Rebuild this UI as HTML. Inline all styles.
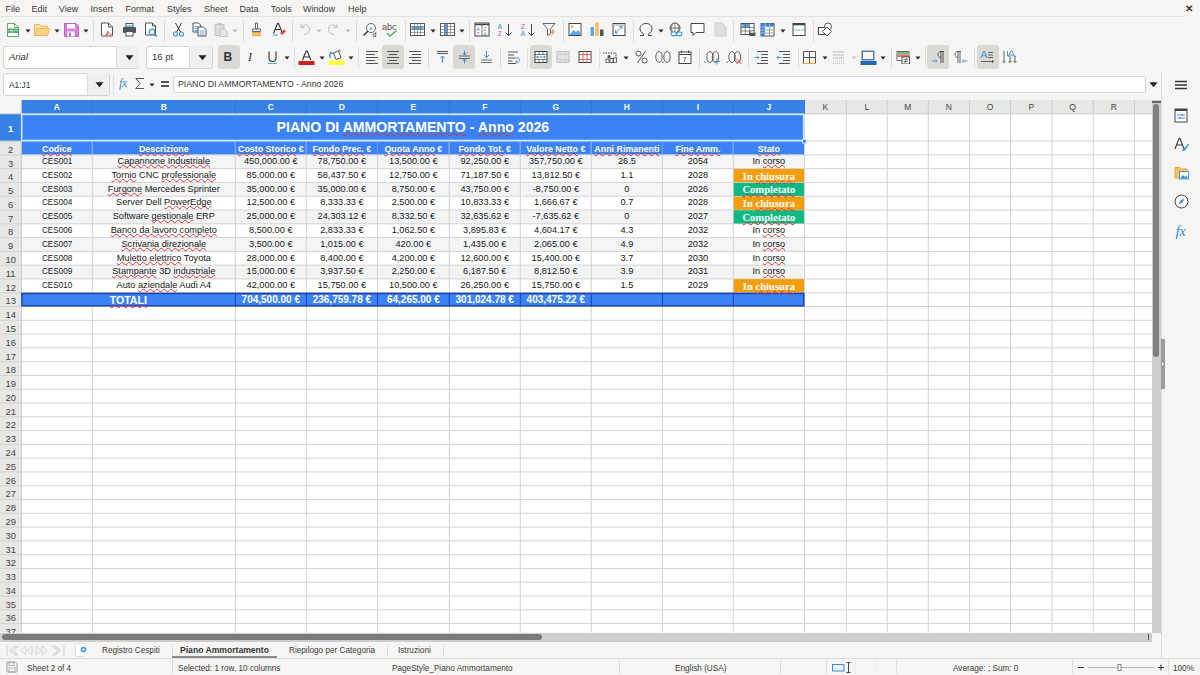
<!DOCTYPE html><html><head><meta charset="utf-8"><style>
*{margin:0;padding:0;box-sizing:border-box}
html,body{width:1200px;height:675px;overflow:hidden;background:#f6f5f4;font-family:"Liberation Sans",sans-serif;color:#333}
.ab{position:absolute}
.t{position:absolute;white-space:nowrap}
.menu{font-size:9px;color:#3a3a3a;top:5.3px;line-height:1}
.ui{font-size:9px;line-height:1;color:#3a3a3a;transform:scaleX(0.91);transform-origin:0 0;margin-top:1.3px}
.c{position:absolute;font-size:9.2px;color:#161616;white-space:nowrap;display:flex;align-items:center;justify-content:center;overflow:visible;line-height:1}
.hd{position:absolute;font-size:8.5px;color:#555;display:flex;align-items:center;justify-content:center;line-height:1}
.sep{position:absolute;width:1px;background:#dcdbda}
.sp{text-decoration:underline wavy #d63030;text-decoration-thickness:0.7px;text-underline-offset:-0.2px;text-decoration-skip-ink:none}
.arr{position:absolute;width:0;height:0;border-left:3px solid transparent;border-right:3px solid transparent;border-top:3px solid #222}
</style></head><body>

<div class="t menu" style="left:5.6px">File</div>
<div class="t menu" style="left:31.5px">Edit</div>
<div class="t menu" style="left:58.8px">View</div>
<div class="t menu" style="left:90.4px">Insert</div>
<div class="t menu" style="left:125.6px">Format</div>
<div class="t menu" style="left:167px">Styles</div>
<div class="t menu" style="left:204px">Sheet</div>
<div class="t menu" style="left:239.6px">Data</div>
<div class="t menu" style="left:270.7px">Tools</div>
<div class="t menu" style="left:303px">Window</div>
<div class="t menu" style="left:348px">Help</div>
<div class="ab" style="left:0;top:16px;width:1184px;height:1px;background:#e4e3e1"></div>
<div class="t" style="left:1185px;top:3.3px;font-size:10px;font-weight:bold;color:#333">&#x2715;</div>
<svg class="ab" style="left:0;top:0" width="1200" height="675" viewBox="0 0 1200 675"><rect x="0.00" y="100.00" width="1152.00" height="532.50" fill="#ffffff"/><rect x="21.30" y="100.00" width="1130.70" height="13.80" fill="#e7e7e6"/><rect x="21.30" y="100.00" width="783.20" height="13.80" fill="#3581e6"/><rect x="0.00" y="113.80" width="21.30" height="518.70" fill="#e7e7e6"/><rect x="0.00" y="113.80" width="21.30" height="27.30" fill="#3581e6"/><rect x="0.00" y="100.00" width="21.30" height="13.80" fill="#f6f5f4"/><rect x="21.30" y="113.80" width="783.20" height="41.08" fill="#3b82f6"/><rect x="21.30" y="154.88" width="783.20" height="13.78" fill="#f3f4f6"/><rect x="21.30" y="182.45" width="783.20" height="13.79" fill="#f3f4f6"/><rect x="21.30" y="210.02" width="783.20" height="13.79" fill="#f3f4f6"/><rect x="21.30" y="237.59" width="783.20" height="13.78" fill="#f3f4f6"/><rect x="21.30" y="265.16" width="783.20" height="13.79" fill="#f3f4f6"/><rect x="733.30" y="168.67" width="71.20" height="13.78" fill="#f59e0b"/><rect x="733.30" y="182.45" width="71.20" height="13.79" fill="#10b981"/><rect x="733.30" y="196.24" width="71.20" height="13.78" fill="#f59e0b"/><rect x="733.30" y="210.02" width="71.20" height="13.79" fill="#10b981"/><rect x="733.30" y="278.95" width="71.20" height="13.79" fill="#f59e0b"/><rect x="21.30" y="292.74" width="783.20" height="13.78" fill="#3b82f6"/><line x1="0.00" y1="141.10" x2="1152.00" y2="141.10" stroke="#d3d3d3" stroke-width="1"/><line x1="0.00" y1="154.88" x2="1152.00" y2="154.88" stroke="#d3d3d3" stroke-width="1"/><line x1="0.00" y1="168.67" x2="1152.00" y2="168.67" stroke="#d3d3d3" stroke-width="1"/><line x1="0.00" y1="182.45" x2="1152.00" y2="182.45" stroke="#d3d3d3" stroke-width="1"/><line x1="0.00" y1="196.24" x2="1152.00" y2="196.24" stroke="#d3d3d3" stroke-width="1"/><line x1="0.00" y1="210.02" x2="1152.00" y2="210.02" stroke="#d3d3d3" stroke-width="1"/><line x1="0.00" y1="223.81" x2="1152.00" y2="223.81" stroke="#d3d3d3" stroke-width="1"/><line x1="0.00" y1="237.59" x2="1152.00" y2="237.59" stroke="#d3d3d3" stroke-width="1"/><line x1="0.00" y1="251.38" x2="1152.00" y2="251.38" stroke="#d3d3d3" stroke-width="1"/><line x1="0.00" y1="265.16" x2="1152.00" y2="265.16" stroke="#d3d3d3" stroke-width="1"/><line x1="0.00" y1="278.95" x2="1152.00" y2="278.95" stroke="#d3d3d3" stroke-width="1"/><line x1="0.00" y1="292.74" x2="1152.00" y2="292.74" stroke="#d3d3d3" stroke-width="1"/><line x1="0.00" y1="306.52" x2="1152.00" y2="306.52" stroke="#d3d3d3" stroke-width="1"/><line x1="0.00" y1="320.31" x2="1152.00" y2="320.31" stroke="#d3d3d3" stroke-width="1"/><line x1="0.00" y1="334.09" x2="1152.00" y2="334.09" stroke="#d3d3d3" stroke-width="1"/><line x1="0.00" y1="347.88" x2="1152.00" y2="347.88" stroke="#d3d3d3" stroke-width="1"/><line x1="0.00" y1="361.66" x2="1152.00" y2="361.66" stroke="#d3d3d3" stroke-width="1"/><line x1="0.00" y1="375.44" x2="1152.00" y2="375.44" stroke="#d3d3d3" stroke-width="1"/><line x1="0.00" y1="389.23" x2="1152.00" y2="389.23" stroke="#d3d3d3" stroke-width="1"/><line x1="0.00" y1="403.01" x2="1152.00" y2="403.01" stroke="#d3d3d3" stroke-width="1"/><line x1="0.00" y1="416.80" x2="1152.00" y2="416.80" stroke="#d3d3d3" stroke-width="1"/><line x1="0.00" y1="430.59" x2="1152.00" y2="430.59" stroke="#d3d3d3" stroke-width="1"/><line x1="0.00" y1="444.37" x2="1152.00" y2="444.37" stroke="#d3d3d3" stroke-width="1"/><line x1="0.00" y1="458.15" x2="1152.00" y2="458.15" stroke="#d3d3d3" stroke-width="1"/><line x1="0.00" y1="471.94" x2="1152.00" y2="471.94" stroke="#d3d3d3" stroke-width="1"/><line x1="0.00" y1="485.73" x2="1152.00" y2="485.73" stroke="#d3d3d3" stroke-width="1"/><line x1="0.00" y1="499.51" x2="1152.00" y2="499.51" stroke="#d3d3d3" stroke-width="1"/><line x1="0.00" y1="513.29" x2="1152.00" y2="513.29" stroke="#d3d3d3" stroke-width="1"/><line x1="0.00" y1="527.08" x2="1152.00" y2="527.08" stroke="#d3d3d3" stroke-width="1"/><line x1="0.00" y1="540.87" x2="1152.00" y2="540.87" stroke="#d3d3d3" stroke-width="1"/><line x1="0.00" y1="554.65" x2="1152.00" y2="554.65" stroke="#d3d3d3" stroke-width="1"/><line x1="0.00" y1="568.43" x2="1152.00" y2="568.43" stroke="#d3d3d3" stroke-width="1"/><line x1="0.00" y1="582.22" x2="1152.00" y2="582.22" stroke="#d3d3d3" stroke-width="1"/><line x1="0.00" y1="596.00" x2="1152.00" y2="596.00" stroke="#d3d3d3" stroke-width="1"/><line x1="0.00" y1="609.79" x2="1152.00" y2="609.79" stroke="#d3d3d3" stroke-width="1"/><line x1="0.00" y1="623.58" x2="1152.00" y2="623.58" stroke="#d3d3d3" stroke-width="1"/><line x1="92.30" y1="113.80" x2="92.30" y2="632.50" stroke="#d3d3d3" stroke-width="1"/><line x1="235.30" y1="113.80" x2="235.30" y2="632.50" stroke="#d3d3d3" stroke-width="1"/><line x1="306.30" y1="113.80" x2="306.30" y2="632.50" stroke="#d3d3d3" stroke-width="1"/><line x1="377.50" y1="113.80" x2="377.50" y2="632.50" stroke="#d3d3d3" stroke-width="1"/><line x1="449.20" y1="113.80" x2="449.20" y2="632.50" stroke="#d3d3d3" stroke-width="1"/><line x1="520.30" y1="113.80" x2="520.30" y2="632.50" stroke="#d3d3d3" stroke-width="1"/><line x1="591.30" y1="113.80" x2="591.30" y2="632.50" stroke="#d3d3d3" stroke-width="1"/><line x1="662.50" y1="113.80" x2="662.50" y2="632.50" stroke="#d3d3d3" stroke-width="1"/><line x1="733.30" y1="113.80" x2="733.30" y2="632.50" stroke="#d3d3d3" stroke-width="1"/><line x1="804.50" y1="113.80" x2="804.50" y2="632.50" stroke="#d3d3d3" stroke-width="1"/><line x1="846.30" y1="113.80" x2="846.30" y2="632.50" stroke="#d3d3d3" stroke-width="1"/><line x1="887.20" y1="113.80" x2="887.20" y2="632.50" stroke="#d3d3d3" stroke-width="1"/><line x1="928.30" y1="113.80" x2="928.30" y2="632.50" stroke="#d3d3d3" stroke-width="1"/><line x1="969.50" y1="113.80" x2="969.50" y2="632.50" stroke="#d3d3d3" stroke-width="1"/><line x1="1010.50" y1="113.80" x2="1010.50" y2="632.50" stroke="#d3d3d3" stroke-width="1"/><line x1="1052.00" y1="113.80" x2="1052.00" y2="632.50" stroke="#d3d3d3" stroke-width="1"/><line x1="1093.30" y1="113.80" x2="1093.30" y2="632.50" stroke="#d3d3d3" stroke-width="1"/><line x1="1134.50" y1="113.80" x2="1134.50" y2="632.50" stroke="#d3d3d3" stroke-width="1"/><line x1="0.00" y1="113.80" x2="1152.00" y2="113.80" stroke="#c9c9c9" stroke-width="1"/><line x1="21.30" y1="100.00" x2="21.30" y2="632.50" stroke="#c9c9c9" stroke-width="1"/><line x1="92.30" y1="100.00" x2="92.30" y2="113.80" stroke="#3373dd" stroke-width="1"/><line x1="235.30" y1="100.00" x2="235.30" y2="113.80" stroke="#3373dd" stroke-width="1"/><line x1="306.30" y1="100.00" x2="306.30" y2="113.80" stroke="#3373dd" stroke-width="1"/><line x1="377.50" y1="100.00" x2="377.50" y2="113.80" stroke="#3373dd" stroke-width="1"/><line x1="449.20" y1="100.00" x2="449.20" y2="113.80" stroke="#3373dd" stroke-width="1"/><line x1="520.30" y1="100.00" x2="520.30" y2="113.80" stroke="#3373dd" stroke-width="1"/><line x1="591.30" y1="100.00" x2="591.30" y2="113.80" stroke="#3373dd" stroke-width="1"/><line x1="662.50" y1="100.00" x2="662.50" y2="113.80" stroke="#3373dd" stroke-width="1"/><line x1="733.30" y1="100.00" x2="733.30" y2="113.80" stroke="#3373dd" stroke-width="1"/><line x1="804.50" y1="100.00" x2="804.50" y2="113.80" stroke="#3373dd" stroke-width="1"/><line x1="846.30" y1="100.00" x2="846.30" y2="113.80" stroke="#cdcdcd" stroke-width="1"/><line x1="887.20" y1="100.00" x2="887.20" y2="113.80" stroke="#cdcdcd" stroke-width="1"/><line x1="928.30" y1="100.00" x2="928.30" y2="113.80" stroke="#cdcdcd" stroke-width="1"/><line x1="969.50" y1="100.00" x2="969.50" y2="113.80" stroke="#cdcdcd" stroke-width="1"/><line x1="1010.50" y1="100.00" x2="1010.50" y2="113.80" stroke="#cdcdcd" stroke-width="1"/><line x1="1052.00" y1="100.00" x2="1052.00" y2="113.80" stroke="#cdcdcd" stroke-width="1"/><line x1="1093.30" y1="100.00" x2="1093.30" y2="113.80" stroke="#cdcdcd" stroke-width="1"/><line x1="1134.50" y1="100.00" x2="1134.50" y2="113.80" stroke="#cdcdcd" stroke-width="1"/><rect x="21.80" y="114.30" width="782.20" height="26.30" fill="#3b82f6"/><line x1="92.30" y1="141.10" x2="92.30" y2="154.88" stroke="#6a9ef2" stroke-width="1"/><line x1="235.30" y1="141.10" x2="235.30" y2="154.88" stroke="#6a9ef2" stroke-width="1"/><line x1="306.30" y1="141.10" x2="306.30" y2="154.88" stroke="#6a9ef2" stroke-width="1"/><line x1="377.50" y1="141.10" x2="377.50" y2="154.88" stroke="#6a9ef2" stroke-width="1"/><line x1="449.20" y1="141.10" x2="449.20" y2="154.88" stroke="#6a9ef2" stroke-width="1"/><line x1="520.30" y1="141.10" x2="520.30" y2="154.88" stroke="#6a9ef2" stroke-width="1"/><line x1="591.30" y1="141.10" x2="591.30" y2="154.88" stroke="#6a9ef2" stroke-width="1"/><line x1="662.50" y1="141.10" x2="662.50" y2="154.88" stroke="#6a9ef2" stroke-width="1"/><line x1="733.30" y1="141.10" x2="733.30" y2="154.88" stroke="#6a9ef2" stroke-width="1"/><rect x="733.80" y="169.17" width="70.20" height="12.78" fill="#f59e0b"/><rect x="733.80" y="182.95" width="70.20" height="12.79" fill="#10b981"/><rect x="733.80" y="196.74" width="70.20" height="12.78" fill="#f59e0b"/><rect x="733.80" y="210.52" width="70.20" height="12.79" fill="#10b981"/><rect x="733.80" y="279.45" width="70.20" height="12.79" fill="#f59e0b"/><rect x="21.80" y="293.24" width="782.20" height="12.78" fill="#3b82f6"/><line x1="235.30" y1="292.74" x2="235.30" y2="306.52" stroke="#1e40af" stroke-width="1"/><line x1="306.30" y1="292.74" x2="306.30" y2="306.52" stroke="#1e40af" stroke-width="1"/><line x1="377.50" y1="292.74" x2="377.50" y2="306.52" stroke="#1e40af" stroke-width="1"/><line x1="449.20" y1="292.74" x2="449.20" y2="306.52" stroke="#1e40af" stroke-width="1"/><line x1="520.30" y1="292.74" x2="520.30" y2="306.52" stroke="#1e40af" stroke-width="1"/><line x1="591.30" y1="292.74" x2="591.30" y2="306.52" stroke="#1e40af" stroke-width="1"/><line x1="662.50" y1="292.74" x2="662.50" y2="306.52" stroke="#1e40af" stroke-width="1"/><line x1="733.30" y1="292.74" x2="733.30" y2="306.52" stroke="#1e40af" stroke-width="1"/><rect x="22.00" y="293.44" width="781.80" height="12.38" fill="none" stroke="#1e40af" stroke-width="1.5"/><rect x="21.80" y="114.50" width="781.80" height="25.90" fill="none" stroke="#c9ecff" stroke-width="1.4"/><rect x="802.4" y="139.5" width="3.8" height="3.6" fill="#3b82f6" stroke="#dff0ff" stroke-width="0.8"/></svg>
<div class="hd" style="left:21.3px;top:100px;width:71.0px;height:13.8px;color:#ffffff;font-weight:bold">A</div>
<div class="hd" style="left:92.3px;top:100px;width:143.0px;height:13.8px;color:#ffffff;font-weight:bold">B</div>
<div class="hd" style="left:235.3px;top:100px;width:71.0px;height:13.8px;color:#ffffff;font-weight:bold">C</div>
<div class="hd" style="left:306.3px;top:100px;width:71.2px;height:13.8px;color:#ffffff;font-weight:bold">D</div>
<div class="hd" style="left:377.5px;top:100px;width:71.7px;height:13.8px;color:#ffffff;font-weight:bold">E</div>
<div class="hd" style="left:449.2px;top:100px;width:71.1px;height:13.8px;color:#ffffff;font-weight:bold">F</div>
<div class="hd" style="left:520.3px;top:100px;width:71.0px;height:13.8px;color:#ffffff;font-weight:bold">G</div>
<div class="hd" style="left:591.3px;top:100px;width:71.2px;height:13.8px;color:#ffffff;font-weight:bold">H</div>
<div class="hd" style="left:662.5px;top:100px;width:70.8px;height:13.8px;color:#ffffff;font-weight:bold">I</div>
<div class="hd" style="left:733.3px;top:100px;width:71.2px;height:13.8px;color:#ffffff;font-weight:bold">J</div>
<div class="hd" style="left:804.5px;top:100px;width:41.8px;height:13.8px;color:#444;font-weight:normal">K</div>
<div class="hd" style="left:846.3px;top:100px;width:40.9px;height:13.8px;color:#444;font-weight:normal">L</div>
<div class="hd" style="left:887.2px;top:100px;width:41.1px;height:13.8px;color:#444;font-weight:normal">M</div>
<div class="hd" style="left:928.3px;top:100px;width:41.2px;height:13.8px;color:#444;font-weight:normal">N</div>
<div class="hd" style="left:969.5px;top:100px;width:41.0px;height:13.8px;color:#444;font-weight:normal">O</div>
<div class="hd" style="left:1010.5px;top:100px;width:41.5px;height:13.8px;color:#444;font-weight:normal">P</div>
<div class="hd" style="left:1052.0px;top:100px;width:41.3px;height:13.8px;color:#444;font-weight:normal">Q</div>
<div class="hd" style="left:1093.3px;top:100px;width:41.2px;height:13.8px;color:#444;font-weight:normal">R</div>
<div class="hd" style="left:0;top:113.8px;width:21.3px;height:27.3px;color:#ffffff;font-weight:bold;font-size:9.4px;padding-top:3px">1</div>
<div class="hd" style="left:0;top:141.1px;width:21.3px;height:13.8px;color:#444;font-weight:normal;font-size:9.4px;padding-top:3px">2</div>
<div class="hd" style="left:0;top:154.9px;width:21.3px;height:13.8px;color:#444;font-weight:normal;font-size:9.4px;padding-top:3px">3</div>
<div class="hd" style="left:0;top:168.7px;width:21.3px;height:13.8px;color:#444;font-weight:normal;font-size:9.4px;padding-top:3px">4</div>
<div class="hd" style="left:0;top:182.5px;width:21.3px;height:13.8px;color:#444;font-weight:normal;font-size:9.4px;padding-top:3px">5</div>
<div class="hd" style="left:0;top:196.2px;width:21.3px;height:13.8px;color:#444;font-weight:normal;font-size:9.4px;padding-top:3px">6</div>
<div class="hd" style="left:0;top:210.0px;width:21.3px;height:13.8px;color:#444;font-weight:normal;font-size:9.4px;padding-top:3px">7</div>
<div class="hd" style="left:0;top:223.8px;width:21.3px;height:13.8px;color:#444;font-weight:normal;font-size:9.4px;padding-top:3px">8</div>
<div class="hd" style="left:0;top:237.6px;width:21.3px;height:13.8px;color:#444;font-weight:normal;font-size:9.4px;padding-top:3px">9</div>
<div class="hd" style="left:0;top:251.4px;width:21.3px;height:13.8px;color:#444;font-weight:normal;font-size:9.4px;padding-top:3px">10</div>
<div class="hd" style="left:0;top:265.2px;width:21.3px;height:13.8px;color:#444;font-weight:normal;font-size:9.4px;padding-top:3px">11</div>
<div class="hd" style="left:0;top:278.9px;width:21.3px;height:13.8px;color:#444;font-weight:normal;font-size:9.4px;padding-top:3px">12</div>
<div class="hd" style="left:0;top:292.7px;width:21.3px;height:13.8px;color:#444;font-weight:normal;font-size:9.4px;padding-top:3px">13</div>
<div class="hd" style="left:0;top:306.5px;width:21.3px;height:13.8px;color:#444;font-weight:normal;font-size:9.4px;padding-top:3px">14</div>
<div class="hd" style="left:0;top:320.3px;width:21.3px;height:13.8px;color:#444;font-weight:normal;font-size:9.4px;padding-top:3px">15</div>
<div class="hd" style="left:0;top:334.1px;width:21.3px;height:13.8px;color:#444;font-weight:normal;font-size:9.4px;padding-top:3px">16</div>
<div class="hd" style="left:0;top:347.9px;width:21.3px;height:13.8px;color:#444;font-weight:normal;font-size:9.4px;padding-top:3px">17</div>
<div class="hd" style="left:0;top:361.7px;width:21.3px;height:13.8px;color:#444;font-weight:normal;font-size:9.4px;padding-top:3px">18</div>
<div class="hd" style="left:0;top:375.4px;width:21.3px;height:13.8px;color:#444;font-weight:normal;font-size:9.4px;padding-top:3px">19</div>
<div class="hd" style="left:0;top:389.2px;width:21.3px;height:13.8px;color:#444;font-weight:normal;font-size:9.4px;padding-top:3px">20</div>
<div class="hd" style="left:0;top:403.0px;width:21.3px;height:13.8px;color:#444;font-weight:normal;font-size:9.4px;padding-top:3px">21</div>
<div class="hd" style="left:0;top:416.8px;width:21.3px;height:13.8px;color:#444;font-weight:normal;font-size:9.4px;padding-top:3px">22</div>
<div class="hd" style="left:0;top:430.6px;width:21.3px;height:13.8px;color:#444;font-weight:normal;font-size:9.4px;padding-top:3px">23</div>
<div class="hd" style="left:0;top:444.4px;width:21.3px;height:13.8px;color:#444;font-weight:normal;font-size:9.4px;padding-top:3px">24</div>
<div class="hd" style="left:0;top:458.2px;width:21.3px;height:13.8px;color:#444;font-weight:normal;font-size:9.4px;padding-top:3px">25</div>
<div class="hd" style="left:0;top:471.9px;width:21.3px;height:13.8px;color:#444;font-weight:normal;font-size:9.4px;padding-top:3px">26</div>
<div class="hd" style="left:0;top:485.7px;width:21.3px;height:13.8px;color:#444;font-weight:normal;font-size:9.4px;padding-top:3px">27</div>
<div class="hd" style="left:0;top:499.5px;width:21.3px;height:13.8px;color:#444;font-weight:normal;font-size:9.4px;padding-top:3px">28</div>
<div class="hd" style="left:0;top:513.3px;width:21.3px;height:13.8px;color:#444;font-weight:normal;font-size:9.4px;padding-top:3px">29</div>
<div class="hd" style="left:0;top:527.1px;width:21.3px;height:13.8px;color:#444;font-weight:normal;font-size:9.4px;padding-top:3px">30</div>
<div class="hd" style="left:0;top:540.9px;width:21.3px;height:13.8px;color:#444;font-weight:normal;font-size:9.4px;padding-top:3px">31</div>
<div class="hd" style="left:0;top:554.6px;width:21.3px;height:13.8px;color:#444;font-weight:normal;font-size:9.4px;padding-top:3px">32</div>
<div class="hd" style="left:0;top:568.4px;width:21.3px;height:13.8px;color:#444;font-weight:normal;font-size:9.4px;padding-top:3px">33</div>
<div class="hd" style="left:0;top:582.2px;width:21.3px;height:13.8px;color:#444;font-weight:normal;font-size:9.4px;padding-top:3px">34</div>
<div class="hd" style="left:0;top:596.0px;width:21.3px;height:13.8px;color:#444;font-weight:normal;font-size:9.4px;padding-top:3px">35</div>
<div class="hd" style="left:0;top:609.8px;width:21.3px;height:13.8px;color:#444;font-weight:normal;font-size:9.4px;padding-top:3px">36</div>
<div class="hd" style="left:0;top:623.6px;width:21.3px;height:13.8px;color:#444;font-weight:normal;font-size:9.4px;padding-top:3px">37</div>
<div class="c" style="left:21.3px;top:113.8px;width:783.2px;height:27.3px;font-size:14.1px;font-weight:bold;color:#fff"><span>PIANO DI <span class="sp">AMMORTAMENTO</span> - <span class="sp">Anno</span> 2026</span></div>
<div class="c" style="left:21.3px;top:141.1px;width:71.0px;height:13.8px;font-size:8.9px;font-weight:bold;color:#fff;padding-top:3px"><span><span class="sp">Codice</span></span></div>
<div class="c" style="left:92.3px;top:141.1px;width:143.0px;height:13.8px;font-size:8.9px;font-weight:bold;color:#fff;padding-top:3px"><span><span class="sp">Descrizione</span></span></div>
<div class="c" style="left:235.3px;top:141.1px;width:71.0px;height:13.8px;font-size:8.9px;font-weight:bold;color:#fff;padding-top:3px"><span><span class="sp">Costo Storico</span> €</span></div>
<div class="c" style="left:306.3px;top:141.1px;width:71.2px;height:13.8px;font-size:8.9px;font-weight:bold;color:#fff;padding-top:3px"><span><span class="sp">Fondo Prec.</span> €</span></div>
<div class="c" style="left:377.5px;top:141.1px;width:71.7px;height:13.8px;font-size:8.9px;font-weight:bold;color:#fff;padding-top:3px"><span><span class="sp">Quota Anno</span> €</span></div>
<div class="c" style="left:449.2px;top:141.1px;width:71.1px;height:13.8px;font-size:8.9px;font-weight:bold;color:#fff;padding-top:3px"><span><span class="sp">Fondo Tot.</span> €</span></div>
<div class="c" style="left:520.3px;top:141.1px;width:71.0px;height:13.8px;font-size:8.9px;font-weight:bold;color:#fff;padding-top:3px"><span><span class="sp">Valore Netto</span> €</span></div>
<div class="c" style="left:591.3px;top:141.1px;width:71.2px;height:13.8px;font-size:8.9px;font-weight:bold;color:#fff;padding-top:3px"><span><span class="sp">Anni Rimanenti</span></span></div>
<div class="c" style="left:662.5px;top:141.1px;width:70.8px;height:13.8px;font-size:8.9px;font-weight:bold;color:#fff;padding-top:3px"><span><span class="sp">Fine Amm.</span></span></div>
<div class="c" style="left:733.3px;top:141.1px;width:71.2px;height:13.8px;font-size:8.9px;font-weight:bold;color:#fff;padding-top:3px"><span><span class="sp">Stato</span></span></div>
<div class="c" style="left:21.3px;top:154.9px;width:71.0px;height:13.8px;"><span><span style="display:inline-block;transform:scaleX(0.89)">CES001</span></span></div>
<div class="c" style="left:92.3px;top:154.9px;width:143.0px;height:13.8px;"><span><span class="sp">Capannone Industriale</span></span></div>
<div class="c" style="left:235.3px;top:154.9px;width:71.0px;height:13.8px;"><span>450,000.00 €</span></div>
<div class="c" style="left:306.3px;top:154.9px;width:71.2px;height:13.8px;"><span>78,750.00 €</span></div>
<div class="c" style="left:377.5px;top:154.9px;width:71.7px;height:13.8px;"><span>13,500.00 €</span></div>
<div class="c" style="left:449.2px;top:154.9px;width:71.1px;height:13.8px;"><span>92,250.00 €</span></div>
<div class="c" style="left:520.3px;top:154.9px;width:71.0px;height:13.8px;"><span>357,750.00 €</span></div>
<div class="c" style="left:591.3px;top:154.9px;width:71.2px;height:13.8px;"><span>26.5</span></div>
<div class="c" style="left:662.5px;top:154.9px;width:70.8px;height:13.8px;"><span>2054</span></div>
<div class="c" style="left:733.3px;top:154.9px;width:71.2px;height:13.8px;"><span>In <span class="sp">corso</span></span></div>
<div class="c" style="left:21.3px;top:168.7px;width:71.0px;height:13.8px;"><span><span style="display:inline-block;transform:scaleX(0.89)">CES002</span></span></div>
<div class="c" style="left:92.3px;top:168.7px;width:143.0px;height:13.8px;"><span><span class="sp">Tornio</span> CNC <span class="sp">professionale</span></span></div>
<div class="c" style="left:235.3px;top:168.7px;width:71.0px;height:13.8px;"><span>85,000.00 €</span></div>
<div class="c" style="left:306.3px;top:168.7px;width:71.2px;height:13.8px;"><span>58,437.50 €</span></div>
<div class="c" style="left:377.5px;top:168.7px;width:71.7px;height:13.8px;"><span>12,750.00 €</span></div>
<div class="c" style="left:449.2px;top:168.7px;width:71.1px;height:13.8px;"><span>71,187.50 €</span></div>
<div class="c" style="left:520.3px;top:168.7px;width:71.0px;height:13.8px;"><span>13,812.50 €</span></div>
<div class="c" style="left:591.3px;top:168.7px;width:71.2px;height:13.8px;"><span>1.1</span></div>
<div class="c" style="left:662.5px;top:168.7px;width:70.8px;height:13.8px;"><span>2028</span></div>
<div class="c" style="left:733.3px;top:168.7px;width:71.2px;height:13.8px;font-family:'Liberation Serif',serif;font-weight:bold;font-size:10.6px;color:#fff;padding-top:2.5px"><span>In <span class="sp">chiusura</span></span></div>
<div class="c" style="left:21.3px;top:182.5px;width:71.0px;height:13.8px;"><span><span style="display:inline-block;transform:scaleX(0.89)">CES003</span></span></div>
<div class="c" style="left:92.3px;top:182.5px;width:143.0px;height:13.8px;"><span><span class="sp">Furgone</span> Mercedes Sprinter</span></div>
<div class="c" style="left:235.3px;top:182.5px;width:71.0px;height:13.8px;"><span>35,000.00 €</span></div>
<div class="c" style="left:306.3px;top:182.5px;width:71.2px;height:13.8px;"><span>35,000.00 €</span></div>
<div class="c" style="left:377.5px;top:182.5px;width:71.7px;height:13.8px;"><span>8,750.00 €</span></div>
<div class="c" style="left:449.2px;top:182.5px;width:71.1px;height:13.8px;"><span>43,750.00 €</span></div>
<div class="c" style="left:520.3px;top:182.5px;width:71.0px;height:13.8px;"><span>-8,750.00 €</span></div>
<div class="c" style="left:591.3px;top:182.5px;width:71.2px;height:13.8px;"><span>0</span></div>
<div class="c" style="left:662.5px;top:182.5px;width:70.8px;height:13.8px;"><span>2026</span></div>
<div class="c" style="left:733.3px;top:182.5px;width:71.2px;height:13.8px;font-family:'Liberation Serif',serif;font-weight:bold;font-size:10.6px;color:#fff;padding-top:2.5px"><span><span class="sp">Completato</span></span></div>
<div class="c" style="left:21.3px;top:196.2px;width:71.0px;height:13.8px;"><span><span style="display:inline-block;transform:scaleX(0.89)">CES004</span></span></div>
<div class="c" style="left:92.3px;top:196.2px;width:143.0px;height:13.8px;"><span>Server Dell <span class="sp">PowerEdge</span></span></div>
<div class="c" style="left:235.3px;top:196.2px;width:71.0px;height:13.8px;"><span>12,500.00 €</span></div>
<div class="c" style="left:306.3px;top:196.2px;width:71.2px;height:13.8px;"><span>8,333.33 €</span></div>
<div class="c" style="left:377.5px;top:196.2px;width:71.7px;height:13.8px;"><span>2,500.00 €</span></div>
<div class="c" style="left:449.2px;top:196.2px;width:71.1px;height:13.8px;"><span>10,833.33 €</span></div>
<div class="c" style="left:520.3px;top:196.2px;width:71.0px;height:13.8px;"><span>1,666.67 €</span></div>
<div class="c" style="left:591.3px;top:196.2px;width:71.2px;height:13.8px;"><span>0.7</span></div>
<div class="c" style="left:662.5px;top:196.2px;width:70.8px;height:13.8px;"><span>2028</span></div>
<div class="c" style="left:733.3px;top:196.2px;width:71.2px;height:13.8px;font-family:'Liberation Serif',serif;font-weight:bold;font-size:10.6px;color:#fff;padding-top:2.5px"><span>In <span class="sp">chiusura</span></span></div>
<div class="c" style="left:21.3px;top:210.0px;width:71.0px;height:13.8px;"><span><span style="display:inline-block;transform:scaleX(0.89)">CES005</span></span></div>
<div class="c" style="left:92.3px;top:210.0px;width:143.0px;height:13.8px;"><span>Software <span class="sp">gestionale</span> ERP</span></div>
<div class="c" style="left:235.3px;top:210.0px;width:71.0px;height:13.8px;"><span>25,000.00 €</span></div>
<div class="c" style="left:306.3px;top:210.0px;width:71.2px;height:13.8px;"><span>24,303.12 €</span></div>
<div class="c" style="left:377.5px;top:210.0px;width:71.7px;height:13.8px;"><span>8,332.50 €</span></div>
<div class="c" style="left:449.2px;top:210.0px;width:71.1px;height:13.8px;"><span>32,635.62 €</span></div>
<div class="c" style="left:520.3px;top:210.0px;width:71.0px;height:13.8px;"><span>-7,635.62 €</span></div>
<div class="c" style="left:591.3px;top:210.0px;width:71.2px;height:13.8px;"><span>0</span></div>
<div class="c" style="left:662.5px;top:210.0px;width:70.8px;height:13.8px;"><span>2027</span></div>
<div class="c" style="left:733.3px;top:210.0px;width:71.2px;height:13.8px;font-family:'Liberation Serif',serif;font-weight:bold;font-size:10.6px;color:#fff;padding-top:2.5px"><span><span class="sp">Completato</span></span></div>
<div class="c" style="left:21.3px;top:223.8px;width:71.0px;height:13.8px;"><span><span style="display:inline-block;transform:scaleX(0.89)">CES006</span></span></div>
<div class="c" style="left:92.3px;top:223.8px;width:143.0px;height:13.8px;"><span><span class="sp">Banco da lavoro completo</span></span></div>
<div class="c" style="left:235.3px;top:223.8px;width:71.0px;height:13.8px;"><span>8,500.00 €</span></div>
<div class="c" style="left:306.3px;top:223.8px;width:71.2px;height:13.8px;"><span>2,833.33 €</span></div>
<div class="c" style="left:377.5px;top:223.8px;width:71.7px;height:13.8px;"><span>1,062.50 €</span></div>
<div class="c" style="left:449.2px;top:223.8px;width:71.1px;height:13.8px;"><span>3,895.83 €</span></div>
<div class="c" style="left:520.3px;top:223.8px;width:71.0px;height:13.8px;"><span>4,604.17 €</span></div>
<div class="c" style="left:591.3px;top:223.8px;width:71.2px;height:13.8px;"><span>4.3</span></div>
<div class="c" style="left:662.5px;top:223.8px;width:70.8px;height:13.8px;"><span>2032</span></div>
<div class="c" style="left:733.3px;top:223.8px;width:71.2px;height:13.8px;"><span>In <span class="sp">corso</span></span></div>
<div class="c" style="left:21.3px;top:237.6px;width:71.0px;height:13.8px;"><span><span style="display:inline-block;transform:scaleX(0.89)">CES007</span></span></div>
<div class="c" style="left:92.3px;top:237.6px;width:143.0px;height:13.8px;"><span><span class="sp">Scrivania direzionale</span></span></div>
<div class="c" style="left:235.3px;top:237.6px;width:71.0px;height:13.8px;"><span>3,500.00 €</span></div>
<div class="c" style="left:306.3px;top:237.6px;width:71.2px;height:13.8px;"><span>1,015.00 €</span></div>
<div class="c" style="left:377.5px;top:237.6px;width:71.7px;height:13.8px;"><span>420.00 €</span></div>
<div class="c" style="left:449.2px;top:237.6px;width:71.1px;height:13.8px;"><span>1,435.00 €</span></div>
<div class="c" style="left:520.3px;top:237.6px;width:71.0px;height:13.8px;"><span>2,065.00 €</span></div>
<div class="c" style="left:591.3px;top:237.6px;width:71.2px;height:13.8px;"><span>4.9</span></div>
<div class="c" style="left:662.5px;top:237.6px;width:70.8px;height:13.8px;"><span>2032</span></div>
<div class="c" style="left:733.3px;top:237.6px;width:71.2px;height:13.8px;"><span>In <span class="sp">corso</span></span></div>
<div class="c" style="left:21.3px;top:251.4px;width:71.0px;height:13.8px;"><span><span style="display:inline-block;transform:scaleX(0.89)">CES008</span></span></div>
<div class="c" style="left:92.3px;top:251.4px;width:143.0px;height:13.8px;"><span><span class="sp">Muletto elettrico</span> Toyota</span></div>
<div class="c" style="left:235.3px;top:251.4px;width:71.0px;height:13.8px;"><span>28,000.00 €</span></div>
<div class="c" style="left:306.3px;top:251.4px;width:71.2px;height:13.8px;"><span>8,400.00 €</span></div>
<div class="c" style="left:377.5px;top:251.4px;width:71.7px;height:13.8px;"><span>4,200.00 €</span></div>
<div class="c" style="left:449.2px;top:251.4px;width:71.1px;height:13.8px;"><span>12,600.00 €</span></div>
<div class="c" style="left:520.3px;top:251.4px;width:71.0px;height:13.8px;"><span>15,400.00 €</span></div>
<div class="c" style="left:591.3px;top:251.4px;width:71.2px;height:13.8px;"><span>3.7</span></div>
<div class="c" style="left:662.5px;top:251.4px;width:70.8px;height:13.8px;"><span>2030</span></div>
<div class="c" style="left:733.3px;top:251.4px;width:71.2px;height:13.8px;"><span>In <span class="sp">corso</span></span></div>
<div class="c" style="left:21.3px;top:265.2px;width:71.0px;height:13.8px;"><span><span style="display:inline-block;transform:scaleX(0.89)">CES009</span></span></div>
<div class="c" style="left:92.3px;top:265.2px;width:143.0px;height:13.8px;"><span><span class="sp">Stampante</span> 3D <span class="sp">industriale</span></span></div>
<div class="c" style="left:235.3px;top:265.2px;width:71.0px;height:13.8px;"><span>15,000.00 €</span></div>
<div class="c" style="left:306.3px;top:265.2px;width:71.2px;height:13.8px;"><span>3,937.50 €</span></div>
<div class="c" style="left:377.5px;top:265.2px;width:71.7px;height:13.8px;"><span>2,250.00 €</span></div>
<div class="c" style="left:449.2px;top:265.2px;width:71.1px;height:13.8px;"><span>6,187.50 €</span></div>
<div class="c" style="left:520.3px;top:265.2px;width:71.0px;height:13.8px;"><span>8,812.50 €</span></div>
<div class="c" style="left:591.3px;top:265.2px;width:71.2px;height:13.8px;"><span>3.9</span></div>
<div class="c" style="left:662.5px;top:265.2px;width:70.8px;height:13.8px;"><span>2031</span></div>
<div class="c" style="left:733.3px;top:265.2px;width:71.2px;height:13.8px;"><span>In <span class="sp">corso</span></span></div>
<div class="c" style="left:21.3px;top:278.9px;width:71.0px;height:13.8px;"><span><span style="display:inline-block;transform:scaleX(0.89)">CES010</span></span></div>
<div class="c" style="left:92.3px;top:278.9px;width:143.0px;height:13.8px;"><span>Auto <span class="sp">aziendale</span> Audi A4</span></div>
<div class="c" style="left:235.3px;top:278.9px;width:71.0px;height:13.8px;"><span>42,000.00 €</span></div>
<div class="c" style="left:306.3px;top:278.9px;width:71.2px;height:13.8px;"><span>15,750.00 €</span></div>
<div class="c" style="left:377.5px;top:278.9px;width:71.7px;height:13.8px;"><span>10,500.00 €</span></div>
<div class="c" style="left:449.2px;top:278.9px;width:71.1px;height:13.8px;"><span>26,250.00 €</span></div>
<div class="c" style="left:520.3px;top:278.9px;width:71.0px;height:13.8px;"><span>15,750.00 €</span></div>
<div class="c" style="left:591.3px;top:278.9px;width:71.2px;height:13.8px;"><span>1.5</span></div>
<div class="c" style="left:662.5px;top:278.9px;width:70.8px;height:13.8px;"><span>2029</span></div>
<div class="c" style="left:733.3px;top:278.9px;width:71.2px;height:13.8px;font-family:'Liberation Serif',serif;font-weight:bold;font-size:10.6px;color:#fff;padding-top:2.5px"><span>In <span class="sp">chiusura</span></span></div>
<div class="c" style="left:21.3px;top:292.7px;width:214.0px;height:13.8px;font-size:10.6px;font-weight:bold;color:#fff;padding-top:2px"><span><span class="sp">TOTALI</span></span></div>
<div class="c" style="left:235.3px;top:292.7px;width:71.0px;height:13.8px;font-size:10px;font-weight:bold;color:#fff;padding-top:1.5px"><span>704,500.00 €</span></div>
<div class="c" style="left:306.3px;top:292.7px;width:71.2px;height:13.8px;font-size:10px;font-weight:bold;color:#fff;padding-top:1.5px"><span>236,759.78 €</span></div>
<div class="c" style="left:377.5px;top:292.7px;width:71.7px;height:13.8px;font-size:10px;font-weight:bold;color:#fff;padding-top:1.5px"><span>64,265.00 €</span></div>
<div class="c" style="left:449.2px;top:292.7px;width:71.1px;height:13.8px;font-size:10px;font-weight:bold;color:#fff;padding-top:1.5px"><span>301,024.78 €</span></div>
<div class="c" style="left:520.3px;top:292.7px;width:71.0px;height:13.8px;font-size:10px;font-weight:bold;color:#fff;padding-top:1.5px"><span>403,475.22 €</span></div>
<svg class="ab" style="left:6px;top:22px" width="14" height="15" viewBox="0 0 14 15"><path d="M1.5 1.5H8.5L12.5 5.5V14.5H1.5Z" fill="#fff" stroke="#5ea672" stroke-width="1"/><path d="M8.5 1.5V5.5H12.5" fill="none" stroke="#5ea672" stroke-width="0.9"/><rect x="2" y="6.5" width="10" height="4.5" fill="#5aa56e"/><path d="M2 8.7H12M6 6.5V11" stroke="#bfe3c8" stroke-width="0.8"/></svg><svg class="ab" style="left:24.5px;top:29px" width="6" height="4" viewBox="0 0 6 4"><path d="M0.5 0.5H5.5L3 3.5Z" fill="#222"/></svg><svg class="ab" style="left:34px;top:22px" width="17" height="15" viewBox="0 0 17 15"><path d="M0.5 2.5H5.5L7 4H13.5V13.5H0.5Z" fill="#fde3a6" stroke="#f0b060" stroke-width="1"/><path d="M0.8 13.5L2.8 6.5H15.5L13.5 13.5Z" fill="#fbd583" stroke="#f0b060" stroke-width="0.9"/></svg><svg class="ab" style="left:54px;top:29px" width="6" height="4" viewBox="0 0 6 4"><path d="M0.5 0.5H5.5L3 3.5Z" fill="#222"/></svg><svg class="ab" style="left:64px;top:22px" width="15" height="15" viewBox="0 0 15 15"><path d="M0.5 1.5H12L14.5 4V14.5H0.5Z" fill="#d783d9" stroke="#c060c4" stroke-width="1"/><rect x="3" y="2" width="8" height="4.5" fill="#fff"/><rect x="3.5" y="9.5" width="7" height="5" fill="#fff"/><rect x="5" y="10.5" width="1.8" height="4" fill="#c060c4"/></svg><svg class="ab" style="left:83px;top:29px" width="6" height="4" viewBox="0 0 6 4"><path d="M0.5 0.5H5.5L3 3.5Z" fill="#222"/></svg><div class="ab" style="left:93px;top:20px;width:1px;height:22px;background:#dedddb"></div><svg class="ab" style="left:100px;top:22px" width="14" height="15" viewBox="0 0 14 15"><path d="M1.5 1H8.5L12.5 5V14H1.5Z" fill="#fff" stroke="#555"/><path d="M8.5 1V5H12.5" fill="none" stroke="#555"/><path d="M6 14C7 10 8 8 8.5 10.5C9 12 11 12.5 13 12.8M8.5 10.5L6.5 13.5" fill="none" stroke="#e0443e" stroke-width="1"/></svg><svg class="ab" style="left:122px;top:22px" width="15" height="15" viewBox="0 0 15 15"><rect x="4" y="1.5" width="7" height="4" fill="#fff" stroke="#555"/><rect x="1" y="5" width="13" height="6" rx="1" fill="#555"/><rect x="3" y="3.5" width="9" height="1.6" fill="#5aaee0"/><rect x="4" y="9.5" width="7" height="4.5" fill="#fff" stroke="#555"/></svg><svg class="ab" style="left:144px;top:22px" width="14" height="15" viewBox="0 0 14 15"><path d="M1.5 1H8.5L11.5 4V13H1.5Z" fill="#fff" stroke="#555"/><path d="M8.5 1V4H11.5" fill="none" stroke="#555"/><circle cx="8" cy="10" r="2.8" fill="#fff" stroke="#3a8fd6" stroke-width="1.2"/><path d="M10 12L13 14.5" stroke="#3a8fd6" stroke-width="1.4"/></svg><div class="ab" style="left:164px;top:20px;width:1px;height:22px;background:#dedddb"></div><svg class="ab" style="left:172px;top:22px" width="13" height="15" viewBox="0 0 13 15"><path d="M3.5 1L8.5 10M9.5 1L4.5 10" stroke="#333" stroke-width="1"/><circle cx="3.5" cy="12" r="2" fill="#fff" stroke="#3a8fd6" stroke-width="1.1"/><circle cx="9.5" cy="12" r="2" fill="#fff" stroke="#3a8fd6" stroke-width="1.1"/></svg><svg class="ab" style="left:192px;top:22px" width="15" height="15" viewBox="0 0 15 15"><path d="M1 1H6.5L8.5 3V10H1Z" fill="#fff" stroke="#555"/><path d="M2.5 4.5H6.5M2.5 6.5H6.5M2.5 8.5H6.5" stroke="#3a8fd6" stroke-width="0.8"/><path d="M6 5H11.5L14 7.5V14H6Z" fill="#fff" stroke="#555"/><path d="M7.5 9H12.5M7.5 11H12.5M7.5 13H12.5" stroke="#3a8fd6" stroke-width="0.8"/></svg><svg class="ab" style="left:214px;top:22px" width="14" height="15" viewBox="0 0 14 15"><rect x="1" y="2.5" width="9" height="11" fill="#dcdcdc" stroke="#c4c4c4"/><rect x="3.5" y="1" width="4" height="2.5" fill="#c4c4c4"/><path d="M6 7H10.5L13 9.5V14.5H6Z" fill="#e6e6e6" stroke="#c4c4c4"/></svg><svg class="ab" style="left:232px;top:29px" width="6" height="4" viewBox="0 0 6 4"><path d="M0.5 0.5H5.5L3 3.5Z" fill="#bdbdbd"/></svg><div class="ab" style="left:243px;top:20px;width:1px;height:22px;background:#dedddb"></div><svg class="ab" style="left:251px;top:22px" width="11" height="15" viewBox="0 0 11 15"><path d="M4.5 1H6.5V6.5H4.5Z" fill="#fff" stroke="#555" stroke-width="0.9"/><path d="M1.5 7H9.5V9.5H1.5Z" fill="#fff" stroke="#555" stroke-width="0.9"/><path d="M1 10H10V14H1Z" fill="#f2a23c"/><path d="M1 12H10" stroke="#fff" stroke-width="0.7"/></svg><svg class="ab" style="left:272px;top:22px" width="14" height="15" viewBox="0 0 14 15"><path d="M1.5 11.5L5.5 1.5H6.5L10 10" fill="none" stroke="#333" stroke-width="1.1"/><path d="M3.3 7.5H8.2" stroke="#333"/><path d="M1 13H6" stroke="#3a8fd6" stroke-width="0.9"/><path d="M8 11L12 7.5L14 9.5L10 13Z" fill="#e0443e"/></svg><div class="ab" style="left:292px;top:20px;width:1px;height:22px;background:#dedddb"></div><svg class="ab" style="left:297px;top:22px" width="14" height="15" viewBox="0 0 14 15"><path d="M4 5.5C6 2 12 2 12.5 7C12.8 10 10 12 7 12.5M4 5.5V2M4 5.5H7.5" fill="none" stroke="#bdbdbd" stroke-width="1"/></svg><svg class="ab" style="left:316px;top:29px" width="6" height="4" viewBox="0 0 6 4"><path d="M0.5 0.5H5.5L3 3.5Z" fill="#bdbdbd"/></svg><svg class="ab" style="left:327px;top:22px" width="14" height="15" viewBox="0 0 14 15"><path d="M10 5.5C8 2 2 2 1.5 7C1.2 10 4 12 7 12.5M10 5.5V2M10 5.5H6.5" fill="none" stroke="#bdbdbd" stroke-width="1"/></svg><svg class="ab" style="left:345px;top:29px" width="6" height="4" viewBox="0 0 6 4"><path d="M0.5 0.5H5.5L3 3.5Z" fill="#bdbdbd"/></svg><div class="ab" style="left:356px;top:20px;width:1px;height:22px;background:#dedddb"></div><svg class="ab" style="left:362px;top:22px" width="16" height="15" viewBox="0 0 16 15"><circle cx="9" cy="6" r="4.5" fill="#fff" stroke="#555" stroke-width="0.9"/><path d="M5.8 9.2L1.5 13.5" stroke="#333" stroke-width="1.5"/><text x="7" y="8" font-size="6" fill="#3a8fd6" font-family="Liberation Sans">a</text><text x="10.5" y="14.5" font-size="7" fill="#333" font-family="Liberation Sans">d</text></svg><svg class="ab" style="left:382px;top:22px" width="17" height="15" viewBox="0 0 17 15"><text x="0" y="8" font-size="9" fill="#555" font-family="Liberation Sans">abc</text><path d="M5 11L8 14L14.5 8.5" fill="none" stroke="#3fb36a" stroke-width="1.3"/></svg><div class="ab" style="left:405px;top:20px;width:1px;height:22px;background:#dedddb"></div><svg class="ab" style="left:410px;top:22px" width="15" height="15" viewBox="0 0 15 15"><rect x="0.5" y="1.5" width="14" height="12" fill="#fff" stroke="#555" stroke-width="1"/><rect x="1.5" y="4.5" width="12" height="3" fill="#5aa7e6"/><path d="M1 4.5H14M1 7.5H14M1 10.5H14M4.5 1.5V13.5M7.5 1.5V13.5M10.5 1.5V13.5" stroke="#666" stroke-width="0.6"/></svg><svg class="ab" style="left:429.5px;top:29px" width="6" height="4" viewBox="0 0 6 4"><path d="M0.5 0.5H5.5L3 3.5Z" fill="#222"/></svg><svg class="ab" style="left:440px;top:22px" width="15" height="15" viewBox="0 0 15 15"><rect x="0.5" y="1.5" width="14" height="12" fill="#fff" stroke="#555" stroke-width="1"/><rect x="4.25" y="2" width="3.25" height="11" fill="#5aa7e6"/><path d="M1 4.5H14M1 7.5H14M1 10.5H14M4.5 1.5V13.5M7.5 1.5V13.5M10.5 1.5V13.5" stroke="#666" stroke-width="0.6"/></svg><svg class="ab" style="left:458.7px;top:29px" width="6" height="4" viewBox="0 0 6 4"><path d="M0.5 0.5H5.5L3 3.5Z" fill="#222"/></svg><div class="ab" style="left:469px;top:20px;width:1px;height:22px;background:#dedddb"></div><svg class="ab" style="left:474px;top:22px" width="16" height="15" viewBox="0 0 16 15"><rect x="1" y="1" width="14" height="13" fill="#fff" stroke="#444"/><path d="M1 2.5H15" stroke="#444" stroke-width="1.5"/><path d="M8 2V14" stroke="#444" stroke-width="0.7"/><text x="2.2" y="8.5" font-size="5.5" fill="#3a8fd6" font-family="Liberation Sans">A</text><text x="2.2" y="13.5" font-size="5.5" fill="#c55fc7" font-family="Liberation Sans">Z</text><text x="9.3" y="8.5" font-size="5.5" fill="#c55fc7" font-family="Liberation Sans">Z</text><text x="9.3" y="13.5" font-size="5.5" fill="#3a8fd6" font-family="Liberation Sans">A</text></svg><svg class="ab" style="left:497px;top:22px" width="16" height="15" viewBox="0 0 16 15"><text x="0.5" y="7" font-size="7" fill="#3a8fd6" font-family="Liberation Sans">A</text><text x="0.8" y="14" font-size="7" fill="#c55fc7" font-family="Liberation Sans">Z</text><path d="M11.5 2V13.5M8.5 10.5L11.5 13.5L14.5 10.5" fill="none" stroke="#444" stroke-width="1"/></svg><svg class="ab" style="left:520px;top:22px" width="16" height="15" viewBox="0 0 16 15"><text x="0.8" y="7" font-size="7" fill="#c55fc7" font-family="Liberation Sans">Z</text><text x="0.5" y="14" font-size="7" fill="#3a8fd6" font-family="Liberation Sans">A</text><path d="M11.5 2V13.5M8.5 10.5L11.5 13.5L14.5 10.5" fill="none" stroke="#444" stroke-width="1"/></svg><svg class="ab" style="left:542px;top:22px" width="14" height="15" viewBox="0 0 14 15"><path d="M1 1.5H13L8.5 7V12L5.5 13.5V7Z" fill="#fff" stroke="#555" stroke-width="0.9"/><path d="M11 7L8.5 11H10.5L9 14.5L13 9.5H11L12.5 7Z" fill="#f2a23c"/></svg><div class="ab" style="left:562.5px;top:20px;width:1px;height:22px;background:#dedddb"></div><svg class="ab" style="left:568px;top:22px" width="14" height="15" viewBox="0 0 14 15"><rect x="1" y="1.5" width="12" height="12" fill="#fff" stroke="#444"/><circle cx="4" cy="4.5" r="1.2" fill="#f2a23c"/><path d="M1.5 13L5.5 8L8 10L10 8L12.5 11V13Z" fill="#5aa7e6"/></svg><svg class="ab" style="left:590px;top:22px" width="14" height="15" viewBox="0 0 14 15"><rect x="0.5" y="5" width="3.5" height="9" fill="#5aa7e6"/><rect x="5.2" y="0.5" width="3.5" height="13.5" fill="#f5c060"/><rect x="10" y="7.5" width="3.5" height="6.5" fill="#555"/></svg><svg class="ab" style="left:612px;top:22px" width="14" height="15" viewBox="0 0 14 15"><rect x="1" y="1.5" width="12" height="12" fill="#fff" stroke="#444"/><rect x="1.5" y="2" width="11" height="2" fill="#ccc"/><path d="M3.5 11L10 4.5M10 4.5H7.5M10 4.5V7M3.5 11H6M3.5 11V8.5" fill="none" stroke="#3a8fd6" stroke-width="1"/></svg><div class="ab" style="left:633px;top:20px;width:1px;height:22px;background:#dedddb"></div><svg class="ab" style="left:638px;top:22px" width="16" height="15" viewBox="0 0 16 15"><path d="M2 13.5H5.5V12C3 10.5 2 8.5 2 6.5C2 3.5 4.5 1.5 8 1.5C11.5 1.5 14 3.5 14 6.5C14 8.5 13 10.5 10.5 12V13.5H14" fill="none" stroke="#444" stroke-width="1"/></svg><svg class="ab" style="left:657.5px;top:29px" width="6" height="4" viewBox="0 0 6 4"><path d="M0.5 0.5H5.5L3 3.5Z" fill="#222"/></svg><svg class="ab" style="left:668px;top:22px" width="16" height="15" viewBox="0 0 16 15"><circle cx="7" cy="6" r="5" fill="#fff" stroke="#444" stroke-width="0.9"/><path d="M2 6H12M7 1V11M4.5 2C3.3 4.5 3.3 7.5 4.5 10M9.5 2C10.7 4.5 10.7 7.5 9.5 10" fill="none" stroke="#444" stroke-width="0.7"/><rect x="3" y="10" width="6" height="3.6" rx="1.8" fill="#fff" stroke="#3a8fd6" stroke-width="1.1"/><rect x="8" y="10" width="6" height="3.6" rx="1.8" fill="none" stroke="#3a8fd6" stroke-width="1.1"/></svg><svg class="ab" style="left:690px;top:22px" width="15" height="15" viewBox="0 0 15 15"><path d="M1 1.5H14V10.5H6L3 13.5V10.5H1Z" fill="#fff" stroke="#444" stroke-width="1"/></svg><svg class="ab" style="left:714px;top:22px" width="13" height="15" viewBox="0 0 13 15"><path d="M1 1H8L12 5V14H1Z" fill="#dedede" stroke="#d0d0d0"/></svg><div class="ab" style="left:733px;top:20px;width:1px;height:22px;background:#dedddb"></div><svg class="ab" style="left:740px;top:22px" width="16" height="15" viewBox="0 0 16 15"><rect x="1" y="1.5" width="13" height="11" fill="#fff" stroke="#444" stroke-width="0.9"/><rect x="1.5" y="2" width="8" height="3.5" fill="#5aa7e6"/><path d="M1 5.5H14M1 9H14M5.3 1.5V12.5M9.6 1.5V12.5" stroke="#444" stroke-width="0.6"/><rect x="9" y="10" width="6.5" height="4" rx="1" fill="#555"/><rect x="10" y="9" width="4.5" height="2" fill="#fff" stroke="#555" stroke-width="0.6"/></svg><svg class="ab" style="left:760px;top:22px" width="15" height="15" viewBox="0 0 15 15"><rect x="1" y="1.5" width="13" height="12.5" fill="#fff" stroke="#444" stroke-width="0.9"/><rect x="1" y="1.5" width="4.3" height="12.5" fill="#3f86d2"/><rect x="1" y="1.5" width="13" height="3.5" fill="#3f86d2"/><path d="M1 5H14M1 8H14M1 11H14M5.3 1.5V14M9.6 1.5V14" stroke="#fff" stroke-width="0.5"/><path d="M5.3 8H14M5.3 11H14M9.6 5V14" stroke="#444" stroke-width="0.5"/></svg><svg class="ab" style="left:780px;top:29px" width="6" height="4" viewBox="0 0 6 4"><path d="M0.5 0.5H5.5L3 3.5Z" fill="#222"/></svg><svg class="ab" style="left:792px;top:22px" width="14" height="15" viewBox="0 0 14 15"><rect x="1" y="1.5" width="12" height="12" fill="#fff" stroke="#444"/><rect x="1" y="1.5" width="12" height="1.8" fill="#444"/><path d="M1.5 8H12.5" stroke="#3a8fd6" stroke-dasharray="1.5 1"/></svg><div class="ab" style="left:812.5px;top:20px;width:1px;height:22px;background:#dedddb"></div><svg class="ab" style="left:818px;top:22px" width="15" height="15" viewBox="0 0 15 15"><rect x="0.5" y="5.5" width="7" height="7" fill="#fff" stroke="#444"/><circle cx="10" cy="4.5" r="3.5" fill="#fff" stroke="#444" stroke-width="0.9"/><path d="M9 5L13.5 9.5L9 14L4.5 9.5Z" fill="#fff" stroke="#444" stroke-width="0.9"/></svg>
<div class="ab" style="left:3.3px;top:45.6px;width:136px;height:23px;background:#fff;border:1px solid #d3d2d0;border-radius:3px"></div><div class="ab" style="left:116.3px;top:46.1px;width:22.5px;height:22px;background:#f1f0ee;border-left:1px solid #dcdbd9;border-radius:0 3px 3px 0"></div><div class="t" style="left:9px;top:50.6px;font-size:9.5px;font-style:italic;color:#333">Arial</div><svg class="ab" style="left:125.19999999999999px;top:55.2px" width="9" height="5.5" viewBox="0.3 0.3 5.4 3.4"><path d="M0.5 0.5H5.5L3 3.5Z" fill="#222"/></svg><div class="ab" style="left:145.5px;top:45.6px;width:67px;height:23px;background:#fff;border:1px solid #d3d2d0;border-radius:3px"></div><div class="ab" style="left:189.3px;top:46.1px;width:22.5px;height:22px;background:#f1f0ee;border-left:1px solid #dcdbd9;border-radius:0 3px 3px 0"></div><div class="t" style="left:152px;top:50.6px;font-size:9.5px;color:#333">16 pt</div><svg class="ab" style="left:198px;top:55.2px" width="9" height="5.5" viewBox="0.3 0.3 5.4 3.4"><path d="M0.5 0.5H5.5L3 3.5Z" fill="#222"/></svg><div class="ab" style="left:218px;top:45.2px;width:21.69999999999999px;height:23.799999999999997px;background:#dbd9d6;border-radius:3px"></div><div class="t" style="left:223.5px;top:50px;font-size:12px;font-weight:bold;color:#333">B</div><div class="t" style="left:248px;top:50px;font-size:12px;font-style:italic;color:#333;font-family:'Liberation Serif',serif">I</div><svg class="ab" style="left:267px;top:50px" width="11" height="14" viewBox="0 0 11 14"><path d="M2 1.5V8C2 10.5 3.5 11.5 5.5 11.5C7.5 11.5 9 10.5 9 8V1.5" fill="none" stroke="#333" stroke-width="1.1"/><path d="M1 13.5H10" stroke="#5aa7e6" stroke-width="1.2"/></svg><svg class="ab" style="left:283.7px;top:56px" width="6" height="4" viewBox="0 0 6 4"><path d="M0.5 0.5H5.5L3 3.5Z" fill="#222"/></svg><div class="ab" style="left:294px;top:47px;width:1px;height:21px;background:#dedddb"></div><svg class="ab" style="left:298px;top:49px" width="17" height="17" viewBox="0 0 17 17"><path d="M4.5 11L8.2 2H9.2L12.8 11M5.8 8H11.6" fill="none" stroke="#333" stroke-width="1.1"/><rect x="0.5" y="12" width="16" height="4" fill="#c9211e"/></svg><svg class="ab" style="left:318.7px;top:56px" width="6" height="4" viewBox="0 0 6 4"><path d="M0.5 0.5H5.5L3 3.5Z" fill="#222"/></svg><svg class="ab" style="left:328px;top:49px" width="17" height="17" viewBox="0 0 17 17"><path d="M5.5 4L10.5 2L13 8.5L8 10.5Z" fill="#fff" stroke="#444" stroke-width="0.9"/><path d="M10.5 2C11 0.5 12.5 0.8 12.3 2.5" fill="none" stroke="#444" stroke-width="0.8"/><path d="M2 4H5.5M2 4V9" fill="none" stroke="#3a8fd6" stroke-width="1.3"/><rect x="0.5" y="11.5" width="16" height="4.5" fill="#ffff38"/></svg><svg class="ab" style="left:348px;top:56px" width="6" height="4" viewBox="0 0 6 4"><path d="M0.5 0.5H5.5L3 3.5Z" fill="#222"/></svg><div class="ab" style="left:358px;top:47px;width:1px;height:21px;background:#dedddb"></div><svg class="ab" style="left:366px;top:50px" width="13" height="14" viewBox="0 0 13 14"><path d="M0 1.5H12M0 4.5H9M0 7.5H12M0 10.5H9M0 13.5H12" stroke="#555" stroke-width="1"/></svg><div class="ab" style="left:382px;top:45.2px;width:22px;height:23.799999999999997px;background:#dbd9d6;border-radius:3px"></div><svg class="ab" style="left:387px;top:50px" width="13" height="14" viewBox="0 0 13 14"><path d="M0 1.5H12M2 4.5H10M0 7.5H12M2 10.5H10M0 13.5H12" stroke="#555" stroke-width="1"/></svg><svg class="ab" style="left:409px;top:50px" width="13" height="14" viewBox="0 0 13 14"><path d="M0 1.5H12M3 4.5H12M0 7.5H12M3 10.5H12M0 13.5H12" stroke="#555" stroke-width="1"/></svg><div class="ab" style="left:428px;top:47px;width:1px;height:21px;background:#dedddb"></div><svg class="ab" style="left:436px;top:50px" width="13" height="14" viewBox="0 0 13 14"><path d="M1 1.5H12M1 3.5H12" stroke="#444" stroke-width="0.9"/><path d="M6.5 13V6M4 8.5L6.5 6L9 8.5" fill="none" stroke="#3a8fd6" stroke-width="1"/></svg><div class="ab" style="left:453px;top:45.2px;width:22px;height:23.799999999999997px;background:#dbd9d6;border-radius:3px"></div><svg class="ab" style="left:458px;top:50px" width="13" height="14" viewBox="0 0 13 14"><path d="M1 6H12M1 8.5H12" stroke="#444" stroke-width="0.75"/><path d="M6.5 0.5V5M4.5 3L6.5 5L8.5 3M6.5 13.5V9M4.5 11L6.5 9L8.5 11" fill="none" stroke="#3a8fd6" stroke-width="1"/></svg><svg class="ab" style="left:480px;top:50px" width="13" height="14" viewBox="0 0 13 14"><path d="M1 10H12M1 12.5H12" stroke="#444" stroke-width="0.75"/><path d="M6.5 0.5V7.5M4 5L6.5 7.5L9 5" fill="none" stroke="#3a8fd6" stroke-width="1"/></svg><div class="ab" style="left:500px;top:47px;width:1px;height:21px;background:#dedddb"></div><svg class="ab" style="left:507px;top:50px" width="14" height="14" viewBox="0 0 14 14"><path d="M1 2H11M1 5H7M1 8H8M1 11H5.5M1 13.5H9" stroke="#444" stroke-width="0.9"/><path d="M8 8H11C13 8 13 12 11 12H9M10 10.5L8.7 12L10 13.5" fill="none" stroke="#3a8fd6" stroke-width="0.9"/></svg><div class="ab" style="left:527px;top:47px;width:1px;height:21px;background:#dedddb"></div><div class="ab" style="left:530px;top:45.2px;width:21.700000000000045px;height:23.799999999999997px;background:#dbd9d6;border-radius:3px"></div><svg class="ab" style="left:534px;top:50px" width="14" height="14" viewBox="0 0 14 14"><rect x="1" y="1.5" width="12" height="11" fill="#fff" stroke="#444"/><path d="M1 4.5H13M1 9.5H13M5 1.5V4.5M9 1.5V4.5M5 9.5V12.5M9 9.5V12.5" stroke="#444" stroke-width="0.7"/><path d="M2.5 7H11.5M2.5 7L4 5.8M2.5 7L4 8.2M11.5 7L10 5.8M11.5 7L10 8.2" stroke="#3a8fd6" stroke-width="0.9"/></svg><svg class="ab" style="left:556px;top:50px" width="14" height="14" viewBox="0 0 14 14"><rect x="1" y="1.5" width="12" height="11" fill="#e3e3e3" stroke="#c2c2c2"/><path d="M1 4.5H13M1 9.5H13M5 1.5V4.5M9 1.5V4.5M5 9.5V12.5M9 9.5V12.5" stroke="#c2c2c2" stroke-width="0.7"/></svg><svg class="ab" style="left:578px;top:50px" width="14" height="14" viewBox="0 0 14 14"><rect x="1" y="1.5" width="12" height="11" fill="#fff" stroke="#444"/><path d="M1 4.5H13M1 9.5H13M5 1.5V12.5M9 1.5V12.5" stroke="#e0443e" stroke-width="0.8"/></svg><div class="ab" style="left:598.7px;top:47px;width:1px;height:21px;background:#dedddb"></div><svg class="ab" style="left:602px;top:50px" width="16" height="14" viewBox="0 0 16 14"><path d="M1 3H14V11" fill="none" stroke="#444" stroke-dasharray="1.5 1"/><rect x="4" y="9" width="3" height="3.5" fill="#fff" stroke="#444" stroke-width="0.8"/><rect x="8" y="8.5" width="3" height="4" fill="#fff" stroke="#444" stroke-width="0.8"/><rect x="11.5" y="8" width="3" height="4.5" fill="#fff" stroke="#444" stroke-width="0.8"/><circle cx="7" cy="6.5" r="1.5" fill="#444"/></svg><svg class="ab" style="left:623px;top:56px" width="6" height="4" viewBox="0 0 6 4"><path d="M0.5 0.5H5.5L3 3.5Z" fill="#222"/></svg><svg class="ab" style="left:635px;top:50px" width="13" height="14" viewBox="0 0 13 14"><circle cx="3.5" cy="3.5" r="2.5" fill="none" stroke="#555" stroke-width="1"/><circle cx="9.5" cy="10.5" r="2.5" fill="none" stroke="#555" stroke-width="1"/><path d="M10.5 1L2.5 13" stroke="#555" stroke-width="1"/></svg><svg class="ab" style="left:655px;top:50px" width="17" height="14" viewBox="0 0 17 14"><ellipse cx="4" cy="7" rx="3.2" ry="5.5" fill="none" stroke="#555" stroke-width="0.9"/><ellipse cx="12" cy="7" rx="3.2" ry="5.5" fill="none" stroke="#555" stroke-width="0.9"/><circle cx="7.9" cy="12.3" r="0.7" fill="#555"/></svg><svg class="ab" style="left:678px;top:50px" width="14" height="14" viewBox="0 0 14 14"><rect x="1" y="2" width="12" height="11.5" fill="#fff" stroke="#444"/><path d="M1 4.5H13M3.5 0.5V3M10.5 0.5V3" stroke="#444"/><text x="4.5" y="12" font-size="7.5" fill="#444" font-family="Liberation Sans">7</text></svg><div class="ab" style="left:699px;top:47px;width:1px;height:21px;background:#dedddb"></div><svg class="ab" style="left:704px;top:50px" width="17" height="16" viewBox="0 0 17 16"><circle cx="1" cy="12.3" r="0.7" fill="#555"/><ellipse cx="6" cy="7" rx="3.2" ry="5.5" fill="none" stroke="#555" stroke-width="0.9"/><ellipse cx="11.5" cy="7" rx="3.2" ry="5.5" fill="none" stroke="#555" stroke-width="0.9"/><path d="M13 8.5V14.5M10 11.5H16" stroke="#3a8fd6" stroke-width="1"/></svg><svg class="ab" style="left:726px;top:50px" width="17" height="16" viewBox="0 0 17 16"><circle cx="1" cy="12.3" r="0.7" fill="#555"/><ellipse cx="6" cy="7" rx="3.2" ry="5.5" fill="none" stroke="#555" stroke-width="0.9"/><ellipse cx="11.5" cy="7" rx="3.2" ry="5.5" fill="none" stroke="#555" stroke-width="0.9"/><path d="M10.5 9L15.5 14M15.5 9L10.5 14" stroke="#e0443e" stroke-width="1"/></svg><div class="ab" style="left:748px;top:47px;width:1px;height:21px;background:#dedddb"></div><svg class="ab" style="left:754px;top:50px" width="15" height="14" viewBox="0 0 15 14"><path d="M3 1.5H14M7 4.5H14M7 7.5H14M7 10.5H14M3 13.5H14" stroke="#444" stroke-width="0.9"/><path d="M0.5 7.5H5M3.3 5.8L5 7.5L3.3 9.2" fill="none" stroke="#3a8fd6" stroke-width="0.9"/></svg><svg class="ab" style="left:776px;top:50px" width="15" height="14" viewBox="0 0 15 14"><path d="M3 1.5H14M7 4.5H14M7 7.5H14M7 10.5H14M3 13.5H14" stroke="#444" stroke-width="0.9"/><path d="M5.5 7.5H1M2.7 5.8L1 7.5L2.7 9.2" fill="none" stroke="#3a8fd6" stroke-width="0.9"/></svg><div class="ab" style="left:797.5px;top:47px;width:1px;height:21px;background:#dedddb"></div><svg class="ab" style="left:803px;top:50px" width="14" height="14" viewBox="0 0 14 14"><path d="M0.5 13.5V1.5H12.5V13.5M6.5 1.5V13.5M0.5 7.5H12.5" fill="none" stroke="#555" stroke-width="1"/><path d="M0 13.5H13" stroke="#f2a23c" stroke-width="1"/></svg><svg class="ab" style="left:822px;top:56px" width="6" height="4" viewBox="0 0 6 4"><path d="M0.5 0.5H5.5L3 3.5Z" fill="#222"/></svg><svg class="ab" style="left:832px;top:50px" width="13" height="14" viewBox="0 0 13 14"><path d="M1 2H12M1 5H12M1 8H12" stroke="#bbb" stroke-width="1.2"/><path d="M1 11H12M1 13.5H12" stroke="#bbb" stroke-dasharray="1 1"/></svg><svg class="ab" style="left:851px;top:56px" width="6" height="4" viewBox="0 0 6 4"><path d="M0.5 0.5H5.5L3 3.5Z" fill="#c8c8c8"/></svg><svg class="ab" style="left:860px;top:49px" width="17" height="17" viewBox="0 0 17 17"><rect x="1.5" y="1.5" width="13" height="10" fill="#fff" stroke="#8cc4ee" stroke-width="1"/><rect x="2.5" y="2.5" width="11" height="8" fill="#f4f4f4" stroke="#555" stroke-width="0.8"/><rect x="0.5" y="12" width="16" height="4" fill="#2a67b0"/></svg><svg class="ab" style="left:880px;top:56px" width="6" height="4" viewBox="0 0 6 4"><path d="M0.5 0.5H5.5L3 3.5Z" fill="#222"/></svg><div class="ab" style="left:891px;top:47px;width:1px;height:21px;background:#dedddb"></div><svg class="ab" style="left:896px;top:50px" width="15" height="14" viewBox="0 0 15 14"><rect x="1" y="1.5" width="12" height="9" fill="#fff" stroke="#444" stroke-width="0.8"/><rect x="1.5" y="2" width="11" height="2.5" fill="#6cbf7c"/><rect x="1.5" y="4.5" width="11" height="2.5" fill="#e8706a"/><rect x="6" y="7" width="7.5" height="7" fill="#fff" stroke="#444" stroke-width="0.9"/><path d="M7.5 9.5H12M7.5 11.5H12M11 8L8.5 13" stroke="#444" stroke-width="0.7"/></svg><svg class="ab" style="left:915px;top:56px" width="6" height="4" viewBox="0 0 6 4"><path d="M0.5 0.5H5.5L3 3.5Z" fill="#222"/></svg><div class="ab" style="left:925px;top:47px;width:1px;height:21px;background:#dedddb"></div><div class="ab" style="left:927px;top:45.2px;width:21.700000000000045px;height:23.799999999999997px;background:#dbd9d6;border-radius:3px"></div><svg class="ab" style="left:931px;top:50px" width="14" height="14" viewBox="0 0 14 14"><path d="M9 1.5H13M10 1.5V13M12 1.5V13M10 1.5C6 1.5 6 7.5 10 7.5" fill="none" stroke="#444" stroke-width="0.9"/><path d="M1 11H6M4.5 9.5L6 11L4.5 12.5" fill="none" stroke="#3a8fd6" stroke-width="0.9"/></svg><svg class="ab" style="left:954px;top:50px" width="14" height="14" viewBox="0 0 14 14"><path d="M3 1.5H7M4 1.5V13M6 1.5V13M4 1.5C0 1.5 0 7.5 4 7.5" fill="none" stroke="#555" stroke-width="0.9"/><path d="M13.5 11H8.5M10 9.5L8.5 11L10 12.5" fill="none" stroke="#3a8fd6" stroke-width="0.9"/></svg><div class="ab" style="left:974px;top:47px;width:1px;height:21px;background:#dedddb"></div><div class="ab" style="left:976.5px;top:45.2px;width:22.200000000000045px;height:23.799999999999997px;background:#dbd9d6;border-radius:3px"></div><svg class="ab" style="left:980px;top:50px" width="15" height="14" viewBox="0 0 15 14"><path d="M1 8L3.5 1.5H4.5L7 8M2 5.8H6" fill="none" stroke="#3a8fd6" stroke-width="1"/><path d="M8 2.5H13M8 5H13M8 7.5H13M1 11.5H13.5M12 10L13.5 11.5L12 13" fill="none" stroke="#444" stroke-width="0.8"/></svg><svg class="ab" style="left:1002px;top:50px" width="16" height="14" viewBox="0 0 16 14"><path d="M2 1V12.5M0.5 11L2 12.5L3.5 11M8 6V12.5M6.5 11L8 12.5L9.5 11M13 6V12.5M11.5 11L13 12.5L14.5 11" fill="none" stroke="#444" stroke-width="0.8"/><path d="M6 7L9 1H10L13 7M7 5H12M5.5 1V6" fill="none" stroke="#3a8fd6" stroke-width="0.9"/></svg>
<div class="ab" style="left:3.3px;top:72.7px;width:106.5px;height:23px;background:#fff;border:1px solid #d3d2d0;border-radius:3px"></div><div class="ab" style="left:86.7px;top:73.2px;width:22.6px;height:21.6px;background:#f1f0ee;border-left:1px solid #dcdbd9;border-radius:0 3px 3px 0"></div><div class="t" style="left:9px;top:78.8px;font-size:9.5px;color:#333;transform:scaleX(0.88);transform-origin:0 0">A1:J1</div><svg class="ab" style="left:95px;top:82px" width="9" height="5.5" viewBox="0.3 0.3 5.4 3.4"><path d="M0.5 0.5H5.5L3 3.5Z" fill="#222"/></svg><div class="ab" style="left:113.3px;top:74px;width:1px;height:20px;background:#dedddb"></div><div class="t" style="left:119px;top:75.5px;font-size:12.5px;font-style:italic;color:#3a8fd6;font-family:'Liberation Serif',serif;letter-spacing:-0.5px">f<span style="font-size:11.5px">x</span></div><svg class="ab" style="left:135px;top:77px" width="10" height="13" viewBox="0 0 10 13"><path d="M9 1.5H0.8L5.2 6.5L0.8 11.5H9.2" fill="none" stroke="#555" stroke-width="1"/></svg><svg class="ab" style="left:149px;top:83px" width="6" height="4" viewBox="0 0 6 4"><path d="M0.5 0.5H5.5L3 3.5Z" fill="#222"/></svg><div class="ab" style="left:161px;top:81px;width:8px;height:2px;background:#555"></div><div class="ab" style="left:161px;top:85px;width:8px;height:2px;background:#555"></div><div class="ab" style="left:173.3px;top:76px;width:972.5px;height:16.7px;background:#fff;border:1px solid #d8d7d5;border-radius:2px"></div><div class="t" style="left:178px;top:79px;font-size:8.75px;color:#333">PIANO DI AMMORTAMENTO - Anno 2026</div><svg class="ab" style="left:1149px;top:82px" width="9" height="5.5" viewBox="0.3 0.3 5.4 3.4"><path d="M0.5 0.5H5.5L3 3.5Z" fill="#222"/></svg>
<div class="ab" style="left:1152px;top:100px;width:9px;height:532.5px;background:#cdcdcd"></div><div class="ab" style="left:1153px;top:104px;width:6px;height:253px;background:#7f7f7f;border-radius:3px"></div><div class="ab" style="left:1151.5px;top:100.5px;width:10px;height:2px;background:#666"></div><div class="ab" style="left:0;top:632.5px;width:1152px;height:9.2px;background:#cdcdcd"></div><div class="ab" style="left:2px;top:634px;width:540px;height:6px;background:#7a7a7a;border-radius:3px"></div><div class="ab" style="left:1148px;top:634px;width:1px;height:6px;background:#555"></div>
<div class="ab" style="left:1161px;top:71px;width:1px;height:587px;background:#dcdbd9"></div><svg class="ab" style="left:1174px;top:80px" width="14" height="10" viewBox="0 0 14 10"><path d="M1 1.5H13M1 5H13M1 8.5H13" stroke="#333" stroke-width="1.4"/></svg><svg class="ab" style="left:1174px;top:108px" width="14" height="15" viewBox="0 0 14 15"><rect x="1" y="1" width="12" height="13" fill="#fff" stroke="#444"/><rect x="1" y="1" width="12" height="2" fill="#444"/><path d="M3 7H11M3 10H11" stroke="#3a8fd6" stroke-width="0.9"/><path d="M8 5.8V8.2M6 8.8V11.2" stroke="#3a8fd6" stroke-width="0.9"/></svg><svg class="ab" style="left:1174px;top:137px" width="15" height="15" viewBox="0 0 15 15"><path d="M1 12L5 1.5H6L10 12M2.5 8H8.5" fill="none" stroke="#333" stroke-width="1.1"/><path d="M8 13.5C9 11 10 10 11 11L14 6.5L15 7.5L12 12C11.5 13.5 9.5 14.5 8 13.5Z" fill="#3a8fd6"/></svg><svg class="ab" style="left:1174px;top:165px" width="15" height="15" viewBox="0 0 15 15"><path d="M1 2.5H6L7.5 4H13V13H1Z" fill="#f7c35f" stroke="#e6a737"/><rect x="5.5" y="6.5" width="9" height="7.5" fill="#fff" stroke="#3a8fd6" stroke-width="0.9"/><path d="M6 13.5L9 10L11 12L12.5 10.5L14 13.5Z" fill="#3a8fd6"/></svg><svg class="ab" style="left:1174px;top:194px" width="15" height="15" viewBox="0 0 15 15"><circle cx="7.5" cy="7.5" r="6.5" fill="#fff" stroke="#444" stroke-width="1"/><path d="M10.5 4.5L8.5 8.5L4.5 10.5L6.5 6.5Z" fill="#3a8fd6"/></svg><div class="t" style="left:1175.5px;top:221.5px;font-size:15.5px;font-style:italic;color:#3a8fd6;font-family:'Liberation Serif',serif;letter-spacing:-0.3px">f<span style="font-size:14px">x</span></div><div class="ab" style="left:1161px;top:339px;width:4px;height:50px;background:#9b9b9b"></div><div class="ab" style="left:1161.5px;top:362px;width:0;height:0;border-top:2px solid transparent;border-bottom:2px solid transparent;border-left:2px solid #fff"></div>
<div class="ab" style="left:0;top:641.7px;width:1161px;height:16.6px;background:#f6f5f4"></div><svg class="ab" style="left:6px;top:644px" width="61" height="13" viewBox="0 0 61 13"><path d="M1 1V12M10 1.5L4 6.5L10 11.5M12 1.5L7.5 6.5L12 11.5" fill="none" stroke="#d6d6d6" stroke-width="1.2"/><path d="M15 6.5L20 2V11ZM21 6.5L26 2V11Z" fill="none" stroke="#d6d6d6"/><path d="M30 2V11L35 6.5ZM36 2V11L41 6.5Z" fill="none" stroke="#d6d6d6"/><path d="M46 1.5L52 6.5L46 11.5M48.5 1.5L54 6.5L48.5 11.5M58 1V12" fill="none" stroke="#d6d6d6" stroke-width="1.2"/></svg><div class="ab" style="left:75px;top:643px;width:10px;height:14px;background:#fff;border:1px solid #e3e3e3;border-radius:1px"></div><svg class="ab" style="left:80px;top:646px" width="7" height="7" viewBox="0 0 7 7"><circle cx="3.5" cy="3.5" r="2.8" fill="#3a8fd6"/><path d="M3.5 1.8V5.2M1.8 3.5H5.2" stroke="#fff" stroke-width="0.9"/></svg><div class="t ui" style="left:102px;top:644.8px">Registro Cespiti</div><div class="ab" style="left:171.5px;top:645px;width:1px;height:11px;background:#dedddb"></div><div class="t ui" style="left:179.7px;top:644.8px;font-weight:bold;color:#333;transform:scaleX(0.955)">Piano Ammortamento</div><div class="ab" style="left:171.5px;top:655.5px;width:105px;height:2px;background:#8a8a8a"></div><div class="t ui" style="left:288.5px;top:644.8px">Riepilogo per Categoria</div><div class="ab" style="left:387px;top:645px;width:1px;height:11px;background:#dedddb"></div><div class="t ui" style="left:398px;top:644.8px">Istruzioni</div><div class="ab" style="left:443px;top:645px;width:1px;height:11px;background:#dedddb"></div>
<div class="ab" style="left:0;top:658.3px;width:1200px;height:1px;background:#dddcda"></div><svg class="ab" style="left:6px;top:661px" width="12" height="12" viewBox="0 0 12 12"><path d="M1 1H9.5L11 2.5V11H1Z" fill="none" stroke="#999" stroke-width="0.9"/><rect x="3" y="1.5" width="5" height="3" fill="none" stroke="#999" stroke-width="0.7"/><rect x="3" y="7" width="6" height="4" fill="none" stroke="#999" stroke-width="0.7"/></svg><div class="t ui" style="left:27px;top:662.4px">Sheet 2 of 4</div><div class="ab" style="left:171.5px;top:660px;width:1px;height:14px;background:#dedddb"></div><div class="t ui" style="left:177.5px;top:662.4px">Selected: 1 row, 10 columns</div><div class="t ui" style="left:392px;top:662.4px">PageStyle_Piano Ammortamento</div><div class="ab" style="left:618.5px;top:660px;width:1px;height:14px;background:#dedddb"></div><div class="t ui" style="left:675px;top:662.4px">English (USA)</div><div class="ab" style="left:779.5px;top:660px;width:1px;height:14px;background:#dedddb"></div><div class="ab" style="left:825.6px;top:660px;width:1px;height:14px;background:#dedddb"></div><div class="ab" style="left:855px;top:660px;width:1px;height:14px;background:#ecebe9"></div><div class="ab" style="left:875.3px;top:660px;width:1px;height:14px;background:#ecebe9"></div><svg class="ab" style="left:832px;top:662px" width="20" height="11" viewBox="0 0 20 11"><rect x="0.5" y="2.5" width="11.5" height="6.5" fill="#eaf4fc" stroke="#3a8fd6" stroke-width="1"/><path d="M14.5 0.5H18.5M16.5 0.5V10.5M14.5 10.5H18.5" stroke="#444" stroke-width="1"/></svg><div class="ab" style="left:895.5px;top:660px;width:1px;height:14px;background:#dedddb"></div><div class="t ui" style="left:953px;top:662.4px">Average: ; Sum: 0</div><div class="ab" style="left:1071.5px;top:660px;width:1px;height:14px;background:#dedddb"></div><svg class="ab" style="left:1076px;top:662px" width="90" height="11" viewBox="0 0 90 11"><path d="M2 5.5H8M82 5.5H88M85 2.5V8.5" stroke="#333" stroke-width="1.1"/><path d="M12 5.5H78" stroke="#999" stroke-width="0.7"/><rect x="42" y="2.5" width="3" height="6" fill="#fff" stroke="#555" stroke-width="0.7"/></svg><div class="ab" style="left:1167.5px;top:660px;width:1px;height:14px;background:#dedddb"></div><div class="t ui" style="left:1173px;top:662.4px">100%</div>
</body></html>
